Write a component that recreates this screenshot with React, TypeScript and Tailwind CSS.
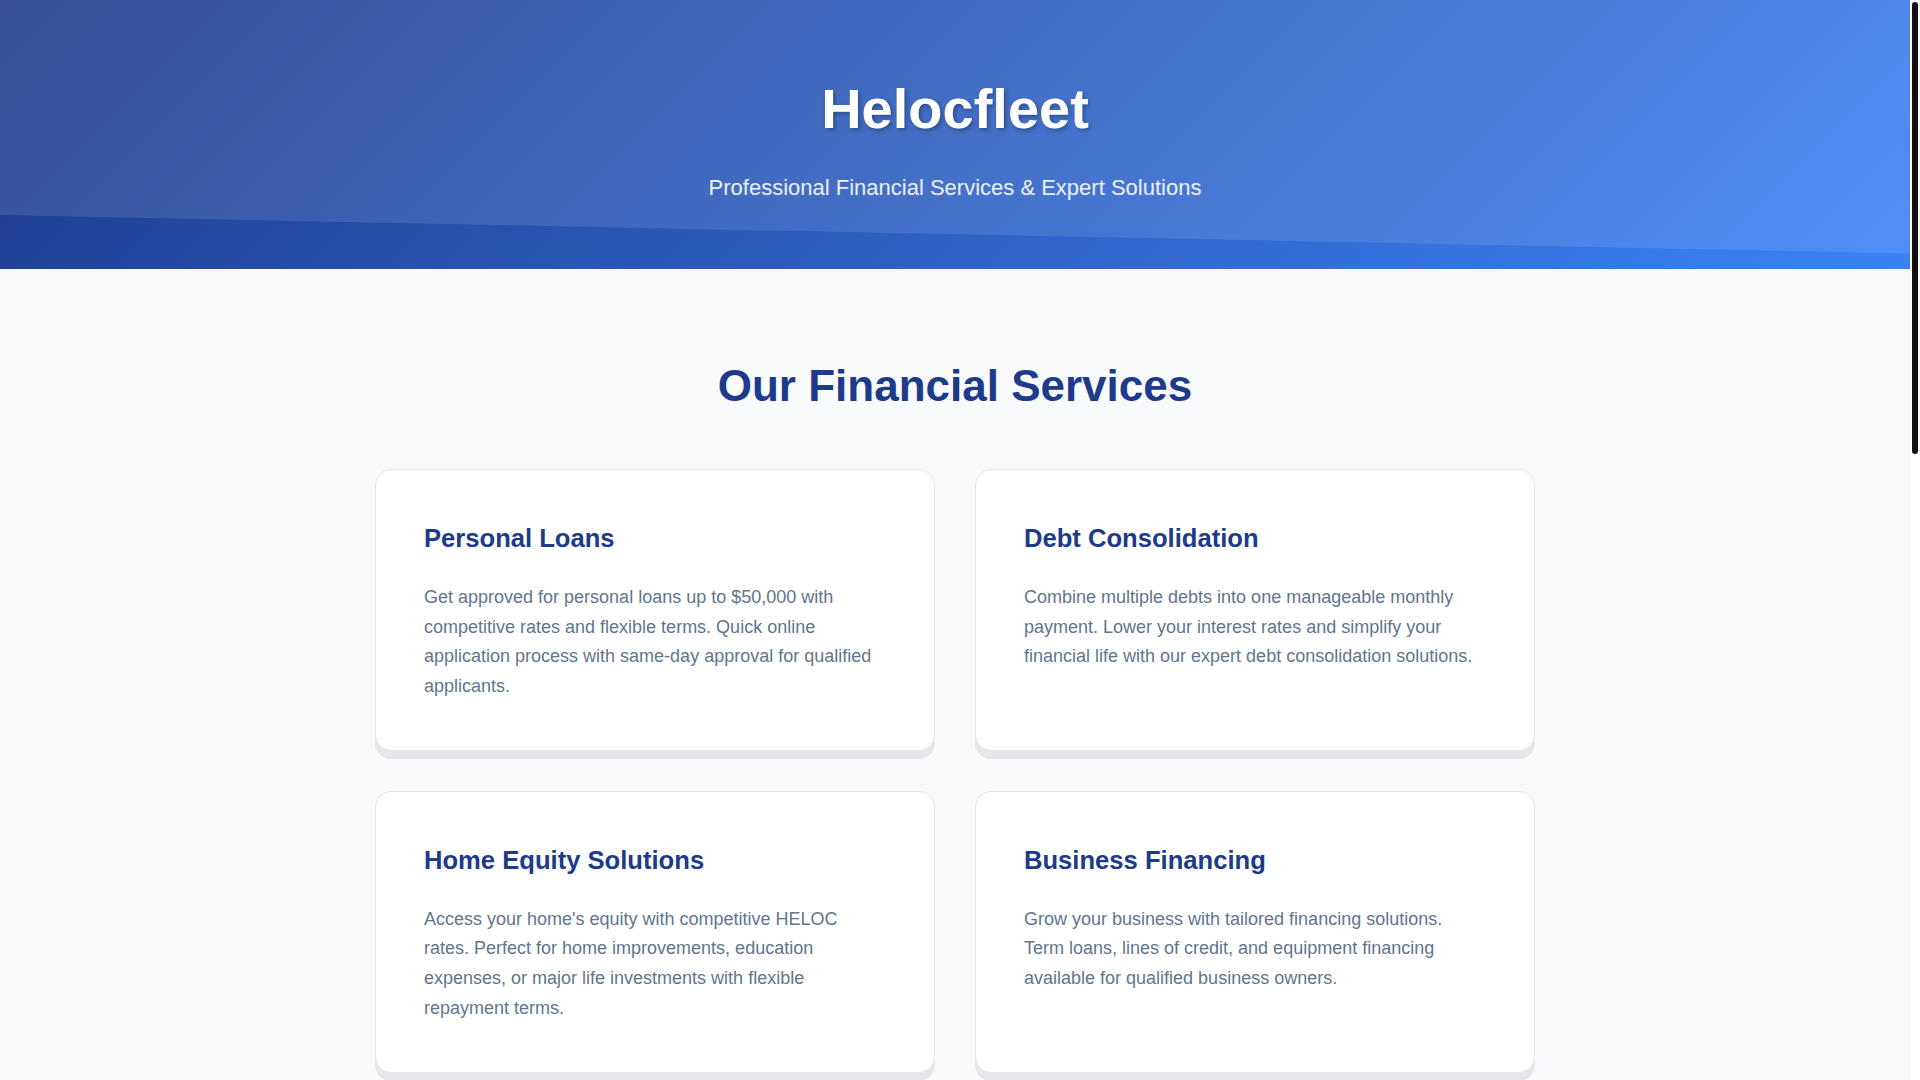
import React from 'react';

const services = [
  {
    title: 'Personal Loans',
    text: 'Get approved for personal loans up to $50,000 with competitive rates and flexible terms. Quick online application process with same-day approval for qualified applicants.',
  },
  {
    title: 'Debt Consolidation',
    text: 'Combine multiple debts into one manageable monthly payment. Lower your interest rates and simplify your financial life with our expert debt consolidation solutions.',
  },
  {
    title: 'Home Equity Solutions',
    text: "Access your home's equity with competitive HELOC rates. Perfect for home improvements, education expenses, or major life investments with flexible repayment terms.",
  },
  {
    title: 'Business Financing',
    text: 'Grow your business with tailored financing solutions. Term loans, lines of credit, and equipment financing available for qualified business owners.',
  },
];

const reasons = [
  {
    title: 'Fast Approvals',
    text: 'Most applications are reviewed within hours, so you can move forward with your plans without the wait.',
  },
  {
    title: 'Transparent Terms',
    text: 'No hidden fees or surprises. Every rate, term and cost is laid out clearly before you sign.',
  },
  {
    title: 'Expert Guidance',
    text: 'Our specialists help you compare options and choose the financing that fits your goals.',
  },
];

function ServiceCard({ title, text }: { title: string; text: string }) {
  return (
    <div className="rounded-2xl border border-slate-200 bg-white p-12 shadow-[0_8px_0_#e5e7eb]">
      <h3 className="mb-6 text-[1.6rem] font-bold text-[#1e3a8a]">{title}</h3>
      <p className="text-lg leading-[1.65] text-slate-500">{text}</p>
    </div>
  );
}

// Page scrollbar as it appears in the window (the headless browser hides the native one)
function Scrollbar() {
  return (
    <div className="fixed top-0 right-0 z-50 h-screen w-[10px] bg-white">
      <div className="mx-auto mt-[2px] h-[452px] w-[6px] rounded-full bg-[#111]" />
    </div>
  );
}

export default function App() {
  return (
    <div className="min-h-screen bg-slate-50 pr-[10px] font-['Liberation_Sans',Arial,sans-serif] leading-[1.6] text-slate-700">
      <Scrollbar />

      {/* Hero */}
      <header className="relative overflow-hidden bg-[linear-gradient(135deg,#1e3a8a_0%,#3b82f6_100%)] py-16 text-center text-white">
        <div className="pointer-events-none absolute inset-0 bg-white/[0.11] [clip-path:polygon(0_0,100%_0,100%_94.3%,0_80%)]" />
        <div className="relative">
          <h1 className="mb-4 text-[3.5rem] font-bold [text-shadow:2px_2px_4px_rgba(0,0,0,0.3)]">Helocfleet</h1>
          <p className="text-[1.375rem] text-white/90">Professional Financial Services &amp; Expert Solutions</p>
        </div>
      </header>

      {/* Services */}
      <section className="pt-[82px] pb-20">
        <div className="mx-auto max-w-[1200px] px-5">
          <h2 className="mb-12 text-center text-[2.75rem] font-bold text-[#1e3a8a]">Our Financial Services</h2>
          <div className="grid grid-cols-2 gap-10">
            {services.map((s) => (
              <ServiceCard key={s.title} title={s.title} text={s.text} />
            ))}
          </div>
        </div>
      </section>

      {/* Why choose us */}
      <section className="bg-white py-20">
        <div className="mx-auto max-w-[1200px] px-5">
          <h2 className="mb-12 text-center text-[2.75rem] font-bold text-[#1e3a8a]">Why Choose Helocfleet</h2>
          <div className="grid grid-cols-3 gap-10">
            {reasons.map((r) => (
              <div key={r.title} className="rounded-2xl border border-slate-200 bg-slate-50 p-10">
                <h3 className="mb-4 text-[1.4rem] font-bold text-[#1e3a8a]">{r.title}</h3>
                <p className="text-lg leading-[1.65] text-slate-500">{r.text}</p>
              </div>
            ))}
          </div>
        </div>
      </section>

      {/* Call to action */}
      <section className="py-32">
        <div className="mx-auto max-w-[800px] px-5 text-center">
          <h2 className="mb-6 text-[2.5rem] font-bold text-[#1e3a8a]">Ready to Get Started?</h2>
          <p className="mb-10 text-lg leading-[1.65] text-slate-500">
            Speak with one of our financial experts today and discover the right solution for your needs.
          </p>
          <button className="rounded-xl bg-[#1e3a8a] px-10 py-4 text-lg font-bold text-white">Contact Us</button>
        </div>
      </section>

      {/* Footer */}
      <footer className="bg-[#1e3a8a] py-24 text-center text-white/80">
        <p className="mb-2 text-2xl font-bold text-white">Helocfleet</p>
        <p>Professional Financial Services &amp; Expert Solutions</p>
        <p className="mt-8 text-sm text-white/60">© 2024 Helocfleet. All rights reserved.</p>
      </footer>
    </div>
  );
}
